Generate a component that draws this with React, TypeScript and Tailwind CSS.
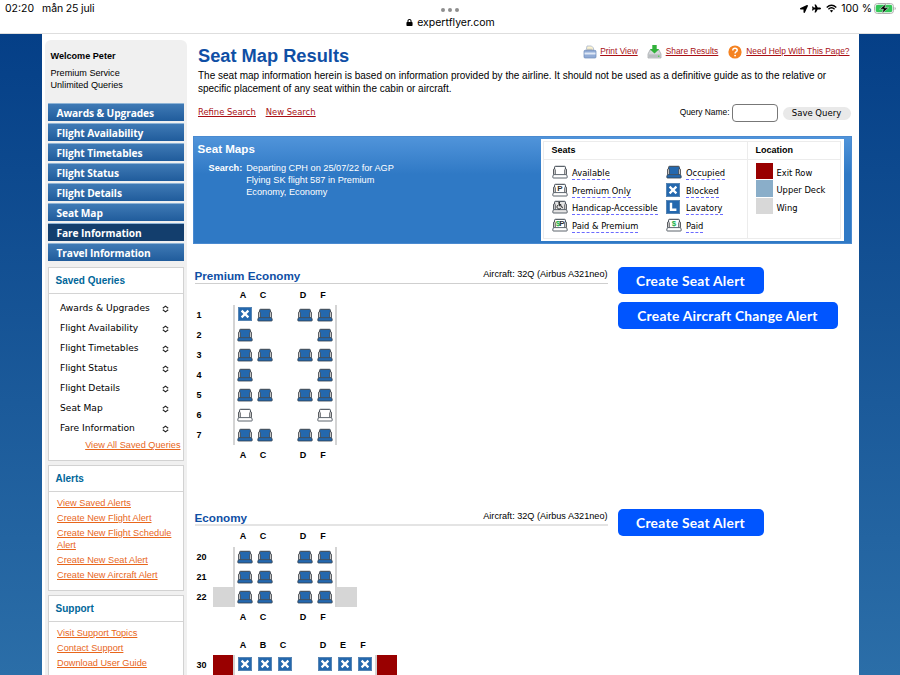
import React from 'react';
import { FaLocationArrow, FaPlane, FaLock } from 'react-icons/fa';

interface cabin_row{
  num:number,
  seats:string,
  location?:string,
}

const navItems = ['Awards & Upgrades', 'Flight Availability', 'Flight Timetables', 'Flight Status', 'Flight Details', 'Seat Map', 'Fare Information', 'Travel Information'];
const savedQueries = navItems.slice(0, 7);
const alertLinks = ['View Saved Alerts', 'Create New Flight Alert', 'Create New Flight Schedule Alert', 'Create New Seat Alert', 'Create New Aircraft Alert'];
const supportLinks = ['Visit Support Topics', 'Contact Support', 'Download User Guide'];

// o = occupied, x = blocked, a = available, - = no seat
const premiumRows: cabin_row[] = [
  { num: 1, seats: 'xo-oo' },
  { num: 2, seats: 'o---o' },
  { num: 3, seats: 'oo-oo' },
  { num: 4, seats: 'o---o' },
  { num: 5, seats: 'oo-oo' },
  { num: 6, seats: 'a---a' },
  { num: 7, seats: 'oo-oo' },
];
const economyRows: cabin_row[] = [
  { num: 20, seats: 'oo-oo' },
  { num: 21, seats: 'oo-oo' },
  { num: 22, seats: 'oo-oo', location: 'wing' },
];
const exitRows: cabin_row[] = [{ num: 30, seats: 'xxx-xxx', location: 'exit' }];

const Seat: React.FC<{ fill?: string; children?: React.ReactNode }> = ({ fill = '#2468ae', children }) => (
  <svg className="h-[14px] w-4 shrink-0" viewBox="0 0 16 14">
    <path d="M3 1.5H13V9.5H3Z" fill={fill} />
    <path d="M2.6 4V2.2Q2.6 1.3 3.5 1.3H12.5Q13.4 1.3 13.4 2.2V4" fill="none" stroke="#343d47" strokeWidth="1" />
    <path d="M1.6 9.4V4.2H2.8M14.4 9.4V4.2H13.2" fill="none" stroke="#4a4e53" strokeWidth="1" />
    <path d="M2.6 4.6V9.4M13.4 4.6V9.4" stroke="#bdbdbd" strokeWidth="1" />
    <path d="M3.5 4.4V9.4M12.5 4.4V9.4" stroke="#4a4e53" strokeWidth=".7" />
    <path d="M1.4 9.6H14.6L15.3 12Q15.3 13 14.4 13H1.6Q.7 13 .7 12Z" fill={fill} stroke="#343d47" strokeWidth=".8" />
    {children}
  </svg>
);

const Blocked = () => (
  <svg className="h-[14px] w-[14px] shrink-0" viewBox="0 0 14 14">
    <rect x=".4" y=".4" width="13.2" height="13.2" fill="#2468ae" stroke="#4f7eae" strokeWidth=".8" />
    <path d="M3.6 3.6L10.4 10.4M10.4 3.6L3.6 10.4" stroke="#fff" strokeWidth="2.2" />
  </svg>
);

const Lavatory = () => (
  <svg className="h-[14px] w-[14px] shrink-0" viewBox="0 0 14 14">
    <rect x=".4" y=".4" width="13.2" height="13.2" fill="#2468ae" stroke="#4f7eae" strokeWidth=".8" />
    <path d="M5 2.8V9.7H10.4" stroke="#fff" strokeWidth="2.4" fill="none" />
  </svg>
);

const seatText = "font-['Liberation_Sans',sans-serif] text-[8px] font-bold";

const PremiumSeat = () => (
  <Seat fill="#fff"><text x="8" y="8.4" textAnchor="middle" fill="#333" className={seatText}>P</text></Seat>
);
const AccessibleSeat = () => (
  <Seat fill="#e4e4e4">
    <circle cx="7.2" cy="2.8" r=".9" fill="#111" />
    <path d="M7.2 3.4V5.8H9.4L10.6 8.2M7.2 4.6H9.2M6.2 5A2.1 2.1 0 1 0 9 7.8" stroke="#111" strokeWidth=".9" fill="none" />
  </Seat>
);
const PaidPremiumSeat = () => (
  <Seat fill="#fff">
    <text x="6" y="8.4" textAnchor="middle" fill="#22b14c" className={seatText}>$</text>
    <text x="10" y="8.4" textAnchor="middle" fill="#333" className={seatText}>P</text>
  </Seat>
);
const PaidSeat = () => (
  <Seat fill="#fff"><text x="8" y="8.4" textAnchor="middle" fill="#22b14c" className={seatText}>$</text></Seat>
);

const seatLegend = [
  { label: 'Available', icon: <Seat fill="#fff" /> },
  { label: 'Premium Only', icon: <PremiumSeat /> },
  { label: 'Handicap-Accessible', icon: <AccessibleSeat /> },
  { label: 'Paid & Premium', icon: <PaidPremiumSeat /> },
];
const statusLegend = [
  { label: 'Occupied', icon: <Seat /> },
  { label: 'Blocked', icon: <Blocked /> },
  { label: 'Lavatory', icon: <Lavatory /> },
  { label: 'Paid', icon: <PaidSeat /> },
];
const locationLegend = [
  { label: 'Exit Row', color: 'bg-[#990000]' },
  { label: 'Upper Deck', color: 'bg-[#8aaec9]' },
  { label: 'Wing', color: 'bg-[#d8d8d8]' },
];

const StatusBar = () => (
  <header className="grid h-[33px] grid-cols-3 bg-white font-['Inter',sans-serif] text-[10.5px] text-black">
    <div className="flex gap-[8px] pl-[5px] leading-[17px]">
      <span>02:20</span>
      <span className="tracking-[-0.15px]">mån 25 juli</span>
    </div>
    <div className="flex flex-col items-center pt-2">
      <div className="flex gap-[3px]">
        <i className="size-1 rounded-full bg-[#8e8e8e]" />
        <i className="size-1 rounded-full bg-[#8e8e8e]" />
        <i className="size-1 rounded-full bg-[#8e8e8e]" />
      </div>
      <div className="flex items-center gap-1 pt-[3px] pl-px leading-[15px]">
        <FaLock className="size-[7px]" />
        <span>expertflyer.com</span>
      </div>
    </div>
    <div className="flex h-[17px] items-center justify-end pr-1">
      <FaLocationArrow className="size-[8px]" />
      <FaPlane className="ml-[4px] size-[9px]" />
      <svg className="ml-[5px] h-[9px] w-[11px]" viewBox="0 0 11 9">
        <path d="M.7 3.4Q5.5-1 10.3 3.4M2.4 5.2Q5.5 2.4 8.6 5.2" fill="none" stroke="#000" strokeWidth="1.4" />
        <path d="M3.8 6.6Q5.5 5.2 7.2 6.6L5.5 8.4Z" fill="#000" />
      </svg>
      <span className="ml-1">100 %</span>
      <svg className="ml-[2px] h-[11px] w-[22px]" viewBox="0 0 22 11">
        <rect x=".5" y=".5" width="19" height="10" rx="3" fill="#fff" stroke="#a5a5a5" strokeWidth=".9" />
        <rect x="1.7" y="1.7" width="16.6" height="7.6" rx="2" fill="#34c759" />
        <path d="M20.7 4V7Q21.7 6.6 21.7 5.5T20.7 4" fill="#a5a5a5" />
        <path d="M12.3.6L5.6 6.2H9.4L8 10.4L14.6 4.8H10.7Z" fill="#000" stroke="#fff" strokeWidth=".5" />
      </svg>
    </div>
  </header>
);

const SidePanel: React.FC<{ title: string; className: string; children: React.ReactNode }> = ({ title, className, children }) => (
  <section className={`mb-1 shrink-0 border border-[#d2d2d2] bg-white ${className}`}>
    <h2 className="h-[26px] border-b border-[#d4d4d4] pl-[7px] text-[10px] font-bold leading-[25px] text-[#006699]">{title}</h2>
    {children}
  </section>
);

const SideLinks: React.FC<{ links: string[] }> = ({ links }) => (
  <ul className="flex flex-col gap-[3px] pl-[8.5px] pt-[5px]">
    {links.map((link) => (
      <li key={link} className="w-[122px] text-[9.2px] leading-[12px] text-[#e8661b] underline underline-offset-1">{link}</li>
    ))}
  </ul>
);

const Sidebar = () => (
  <aside className="mt-[6px] flex w-[142px] shrink-0 flex-col rounded-t-md bg-[#f0f0f0] pl-[3px] pr-[3px]">
    <div className="h-[63px] shrink-0 pl-[3px] pt-[10px] text-[9.1px] leading-[12px]">
      <p className="mb-[5px] font-bold">Welcome Peter</p>
      <p>Premium Service</p>
      <p>Unlimited Queries</p>
    </div>
    <nav className="mb-[6px] flex shrink-0 flex-col gap-[2px]">
      {navItems.map((item) => (
        <a
          key={item}
          className={`h-[18px] border-t border-[#8fb4d6] pl-[9px] font-['Open_Sans',sans-serif] text-[10.2px] font-bold leading-[18px] tracking-[-0.1px] text-white ${item === 'Fare Information' ? 'bg-[#133e6d]' : 'bg-linear-to-b from-[#3f7ab5] to-[#205c9c]'}`}
        >
          {item}
        </a>
      ))}
    </nav>
    <SidePanel title="Saved Queries" className="h-[194px]">
      <ul className="pt-[5px] font-['DejaVu_Sans',sans-serif] text-[9.15px]">
        {savedQueries.map((query) => (
          <li key={query} className="flex h-5 items-center justify-between pl-[11.5px] pr-[14px]">
            {query}
            <svg className="mb-px h-2 w-[7px]" viewBox="0 0 7 8">
              <path d="M.8 3.3L3.5 1.1L6.2 3.3M.8 4.7L3.5 6.9L6.2 4.7" fill="none" stroke="#222" strokeWidth="1.1" />
            </svg>
          </li>
        ))}
      </ul>
      <p className="whitespace-nowrap pr-[2px] text-right text-[9.2px] leading-[13px] text-[#e8661b] underline underline-offset-1">View All Saved Queries</p>
    </SidePanel>
    <SidePanel title="Alerts" className="h-[126px]"><SideLinks links={alertLinks} /></SidePanel>
    <SidePanel title="Support" className="h-[126px]"><SideLinks links={supportLinks} /></SidePanel>
  </aside>
);

const PageHeader = () => (
  <div className="h-[102px] pl-[5.5px]">
    <div className="flex h-[36px] items-start justify-between">
      <h1 className="pt-[9px] text-[18.25px] font-bold leading-[26px] text-[#0f4fa5]">Seat Map Results</h1>
      <div className="flex items-center pr-[9px] pt-[10px] text-[8.4px] text-[#a80f14]">
        <svg className="h-[14px] w-[14px]" viewBox="0 0 14 14">
          <path d="M3 6L4 1H8.5L10.5 3V6Z" fill="#fdf3d0" stroke="#a9b6cc" strokeWidth=".8" />
          <path d="M1 6.5Q1 5.3 2.2 5.3H11.8Q13 5.3 13 6.5V12Q13 13 12 13H2Q1 13 1 12Z" fill="#92acd6" stroke="#6c89b9" strokeWidth=".7" />
          <path d="M1.5 8.5H12.5" stroke="#dfe8f6" strokeWidth="2" />
          <path d="M4 4.3H9.5" stroke="#a0a9b8" strokeWidth=".8" />
        </svg>
        <a className="ml-[3.5px] underline underline-offset-1">Print View</a>
        <svg className="ml-[9.5px] h-[15px] w-[15px]" viewBox="0 0 15 15">
          <path d="M3 6H12L14 10V14H1V10Z" fill="#d5d8da" stroke="#a1a5a8" strokeWidth=".7" />
          <path d="M1.5 10.4H13.5V13.5H1.5Z" fill="#b9bdc0" />
          <path d="M5.3 1H9.7V5H12.3L7.5 9.5L2.7 5H5.3Z" fill="#31b13a" />
          <circle cx="11.7" cy="12.2" r=".8" fill="#4ad04e" />
        </svg>
        <a className="ml-[3.5px] underline underline-offset-1">Share Results</a>
        <svg className="ml-[10px] h-[14px] w-[14px]" viewBox="0 0 14 14">
          <circle cx="7" cy="7" r="6.6" fill="#f58220" />
          <path d="M4.8 5.4Q4.8 3.2 7 3.2T9.2 5.2Q9.2 6.2 8 6.9Q7.1 7.4 7.1 8.5" fill="none" stroke="#fff" strokeWidth="1.5" />
          <circle cx="7.1" cy="10.6" r=".95" fill="#fff" />
        </svg>
        <a className="ml-[4px] underline underline-offset-1">Need Help With This Page?</a>
      </div>
    </div>
    <p className="whitespace-nowrap text-[10px] leading-[12.5px] text-black">
      The seat map information herein is based on information provided by the airline. It should not be used as a definitive guide as to the relative or
      <br />
      specific placement of any seat within the cabin or aircraft.
    </p>
    <div className="flex h-[35px] items-center justify-between pt-[2px]">
      <div className="flex gap-[10px] pb-[3px] font-['DejaVu_Sans',sans-serif] text-[8.4px] text-[#a80f14] underline underline-offset-1">
        <a>Refine Search</a>
        <a>New Search</a>
      </div>
      <div className="flex items-center pb-[2px] pr-[8px] text-[8.4px]">
        <span>Query Name:</span>
        <input className="ml-[2px] h-[18px] w-[46px] rounded-[4px] border border-[#777] bg-white" />
        <button className="ml-[5px] mt-[2px] h-[13px] w-[68px] rounded-full bg-[#e9e9e9] font-['DejaVu_Sans',sans-serif] text-[8.5px] leading-[13px]">Save Query</button>
      </div>
    </div>
  </div>
);

const LegendColumn: React.FC<{ items: { label: string; icon: React.ReactNode }[]; className: string }> = ({ items, className }) => (
  <ul className={className}>
    {items.map(({ label, icon }) => (
      <li key={label} className="flex h-[17.6px] items-start">
        <span className="flex w-[20.5px] shrink-0">{icon}</span>
        <span className="mt-px h-[14px] whitespace-nowrap border-b border-dashed border-[#6a6aff] leading-[14px]">{label}</span>
      </li>
    ))}
  </ul>
);

const SearchPanel = () => (
  <section className="flex h-[108px] w-[659px] justify-between border border-[#4a8ad0] bg-linear-to-b from-[#5094da] to-[#2f79c5] to-35% text-white">
    <div className="pl-1">
      <h2 className="pt-[4px] text-[11.6px] font-bold leading-[15px]">Seat Maps</h2>
      <div className="flex gap-1 pl-[11px] pt-[7px] text-[9.2px] leading-[11.8px]">
        <b>Search:</b>
        <p className="w-[155px] whitespace-nowrap">Departing CPH on 25/07/22 for AGP<br />Flying SK flight 587 in Premium<br />Economy, Economy</p>
      </div>
    </div>
    <div className="mr-[7px] mt-[2px] h-[102px] w-[303px] bg-white p-[2px] text-black">
      <div className="flex h-[98px] w-[298px] border border-[#ececec] font-['DejaVu_Sans',sans-serif] text-[8.35px]">
        <div className="w-[204px] border-r border-[#ececec]">
          <h3 className="h-[18px] border-b border-[#ececec] pl-2 font-['Liberation_Sans',sans-serif] text-[9px] font-bold leading-[16px]">Seats</h3>
          <div className="flex pl-2 pt-[5px]">
            <LegendColumn items={seatLegend} className="w-[114px]" />
            <LegendColumn items={statusLegend} className="w-[80px]" />
          </div>
        </div>
        <div className="flex-1">
          <h3 className="h-[18px] border-b border-[#ececec] pl-2 font-['Liberation_Sans',sans-serif] text-[9px] font-bold leading-[16px]">Location</h3>
          <ul className="pl-2 pt-[2.5px]">
            {locationLegend.map(({ label, color }) => (
              <li key={label} className="flex h-[17.5px] gap-1 whitespace-nowrap leading-[21px]">
                <i className={`h-[16.5px] w-[17px] shrink-0 ${color}`} />
                {label}
              </li>
            ))}
          </ul>
        </div>
      </div>
    </div>
  </section>
);

const ColumnLetters: React.FC<{ letters: string }> = ({ letters }) => (
  <div className="flex h-5 pl-[38.5px] text-[9px] font-bold leading-5">
    {letters.split('').map((letter, i) => (
      <span key={i} className="w-5 text-center">{letter}</span>
    ))}
  </div>
);

const SeatIcon: React.FC<{ type: string }> = ({ type }) => {
  if (type === 'o') return <Seat />;
  if (type === 'a') return <Seat fill="#fff" />;
  if (type === 'x') return <span className="pb-[2px]"><Blocked /></span>;
  return null;
};

const locationColor = (location?: string) => {
  if (location === 'wing') return 'bg-[#d6d6d6]';
  if (location === 'exit') return 'bg-[#990000]';
  return '';
};

const CabinRows: React.FC<{ rows: cabin_row[] }> = ({ rows }) => (
  <div>
    {rows.map((row) => (
      <div key={row.num} className="flex h-5">
        <span className="w-[18px] pl-[2px] text-[9px] font-bold leading-5">{row.num}</span>
        <i className={`w-5 ${locationColor(row.location)}`} />
        <div className="flex border-x-2 border-[#d4d4d4]">
          {row.seats.split('').map((type, i) => (
            <span key={i} className="flex w-5 items-center justify-center"><SeatIcon type={type} /></span>
          ))}
        </div>
        <i className={`w-5 ${locationColor(row.location)}`} />
      </div>
    ))}
  </div>
);

const CabinHeading: React.FC<{ name: string; className: string; infoClass?: string }> = ({ name, className, infoClass = '' }) => (
  <div className={`flex w-[413px] items-start justify-between ${className}`}>
    <h2 className="text-[11.7px] font-bold leading-[17px] text-[#0f4fa5]">{name}</h2>
    <span className={`text-[9.15px] leading-[14px] ${infoClass}`}>Aircraft: 32Q (Airbus A321neo)</span>
  </div>
);

const AlertButton: React.FC<{ label: string; className: string }> = ({ label, className }) => (
  <button className={`h-[27px] rounded-[5px] bg-[#0055ff] font-['Lato',sans-serif] text-[13.8px] font-bold leading-[26px] tracking-[0.25px] text-white ${className}`}>{label}</button>
);

const App = () => (
  <div className="flex h-[675px] w-[900px] flex-col overflow-hidden bg-white font-['Liberation_Sans',sans-serif] text-black">
    <StatusBar />
    <div className="flex min-h-0 flex-1 justify-center border-t border-[#dedede] bg-linear-to-b from-[#053f87] to-[#2b6ea8]">
      <div className="flex w-[817px] bg-white pl-[3px]">
        <Sidebar />
        <main className="ml-[6px] flex-1">
          <PageHeader />
          <SearchPanel />
          <div className="flex pl-[2px] pt-[23px]">
            <div className="h-[242px] w-[413px]">
              <CabinHeading name="Premium Economy" className="h-[17px] border-b border-[#cfcfcf]" />
              <div className="pt-[1px]"><ColumnLetters letters="AC DF" /></div>
              <CabinRows rows={premiumRows} />
              <ColumnLetters letters="AC DF" />
            </div>
            <div className="ml-[10px] flex flex-col items-start gap-2">
              <AlertButton label="Create Seat Alert" className="w-[146px]" />
              <AlertButton label="Create Aircraft Change Alert" className="w-[220px]" />
            </div>
          </div>
          <div className="flex pl-[2px]">
            <div className="w-[413px]">
              <CabinHeading name="Economy" className="h-[17px] border-b-2 border-[#e4e4e4]" />
              <div><ColumnLetters letters="AC DF" /></div>
              <div className="pt-px"><CabinRows rows={economyRows} /></div>
              <ColumnLetters letters="AC DF" />
              <div className="pt-2"><ColumnLetters letters="ABC DEF" /></div>
              <CabinRows rows={exitRows} />
            </div>
            <div className="ml-[10px]">
              <AlertButton label="Create Seat Alert" className="w-[146px]" />
            </div>
          </div>
        </main>
      </div>
    </div>
  </div>
);
export default App;
